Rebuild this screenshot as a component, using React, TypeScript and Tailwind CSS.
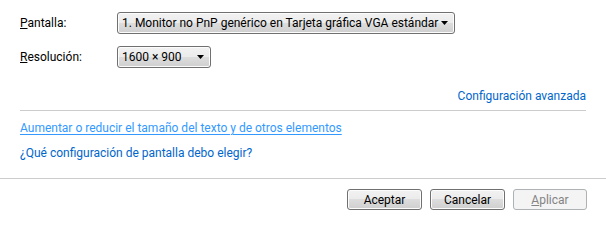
import React from 'react';

const font = { fontFamily: 'Roboto, "Liberation Sans", sans-serif' };

const Arrow: React.FC = () => (
    <svg width="7" height="4" viewBox="0 0 7 4" className="shrink-0">
        <path d="M0 0h7L3.5 4z" fill="#000" />
    </svg>
);

const Combo: React.FC<{ text: string; width: string }> = ({ text, width }) => (
    <div
        className={`${width} h-[22px] flex items-center justify-between pl-[4px] pr-[6px] rounded-[3px] border border-[#707070] shadow-[inset_0_0_0_1px_#fcfcfc] bg-[linear-gradient(#f2f2f2_0%,#ebebeb_50%,#dddddd_50%,#cfcfcf_100%)] text-black`}
    >
        <span className="whitespace-nowrap leading-none">{text}</span>
        <Arrow />
    </div>
);

const Button: React.FC<{ children: React.ReactNode; disabled?: boolean }> = ({ children, disabled }) => (
    <button
        className={
            disabled
                ? 'w-[74px] h-[21px] flex items-center justify-center rounded-[3px] border border-[#adb2b5] bg-[#f4f4f4] text-[#838383] leading-none'
                : 'w-[75px] h-[21px] flex items-center justify-center rounded-[3px] border border-[#707070] shadow-[inset_0_0_0_1px_#fcfcfc] bg-[linear-gradient(#f2f2f2_0%,#ebebeb_50%,#dddddd_50%,#cfcfcf_100%)] text-black leading-none'
        }
    >
        {children}
    </button>
);

export default function App() {
    return (
        <div className="w-[606px] h-[240px] bg-white text-[12px] overflow-hidden" style={font}>
            <div className="px-[20px] pt-[12px]">
                <div className="flex items-center">
                    <span className="w-[97px] text-black">
                        <span className="underline">P</span>antalla:
                    </span>
                    <Combo width="w-[338px]" text="1. Monitor no PnP genérico en Tarjeta gráfica VGA estándar" />
                </div>
                <div className="flex items-center mt-[12px]">
                    <span className="w-[97px] text-black">
                        <span className="underline">R</span>esolución:
                    </span>
                    <Combo width="w-[94px]" text="1600 × 900" />
                </div>
                <div className="flex justify-end mt-[19px] h-[18px] items-center">
                    <span className="text-[#0066cc]">Configuración avanzada</span>
                </div>
                <div className="h-px bg-[#cccccc] mt-[5px]" />
                <div className="mt-[8px] h-[18px] flex items-center">
                    <span className="text-[#3399ff] underline underline-offset-[2px]">Aumentar o reducir el tamaño del texto y de otros elementos</span>
                </div>
                <div className="mt-[7px] h-[18px] flex items-center">
                    <span className="text-[#0066cc]">¿Qué configuración de pantalla debo elegir?</span>
                </div>
            </div>
            <div className="h-px bg-[#cccccc] mt-[16px]" />
            <div className="flex justify-end gap-[8px] pr-[19px] mt-[10px]">
                <Button>Aceptar</Button>
                <Button>Cancelar</Button>
                <Button disabled>
                    <span>
                        <span className="underline">A</span>plicar
                    </span>
                </Button>
            </div>
        </div>
    );
}
